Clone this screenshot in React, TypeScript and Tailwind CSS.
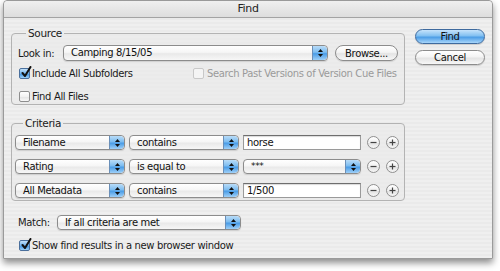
import React from "react";

function Stepper() {
  return (
    <div className="w-[15px] h-full shrink-0 rounded-r-[4px] border-l border-[#6a8fb8] bg-[linear-gradient(to_bottom,#b9dcf8_0%,#7cbcf0_45%,#4a9ce6_55%,#9fd0f8_100%)] flex flex-col items-center justify-center gap-[2px]">
      <svg width="5" height="3" viewBox="0 0 5 3">
        <path d="M2.5 0 L5 3 L0 3Z" fill="#111" />
      </svg>
      <svg width="5" height="3" viewBox="0 0 5 3">
        <path d="M0 0 L5 0 L2.5 3Z" fill="#111" />
      </svg>
    </div>
  );
}

function Popup({ label, className, textClass }: { label: string; className: string; textClass?: string }) {
  return (
    <div
      className={`flex h-[15px] shrink-0 rounded-[4px] border border-[#8c8c8c] overflow-hidden bg-[linear-gradient(to_bottom,#ffffff_0%,#f6f6f6_45%,#e9e9e9_55%,#f7f7f7_100%)] shadow-[0_1px_1px_rgba(0,0,0,0.12)] ${className}`}
    >
      <span className={`flex-1 pl-[7px] leading-[13px] text-[#111] whitespace-nowrap ${textClass ?? ""}`}>{label}</span>
      <Stepper />
    </div>
  );
}

function TextField({ value, className }: { value: string; className: string }) {
  return (
    <div
      className={`h-[15px] shrink-0 bg-white border border-[#9a9a9a] border-t-[#6e6e6e] shadow-[inset_0_1px_1px_rgba(0,0,0,0.15)] pl-[3px] leading-[13px] text-[#111] ${className}`}
    >
      {value}
    </div>
  );
}

function CheckBox({ checked, disabled }: { checked?: boolean; disabled?: boolean }) {
  if (checked) {
    return (
      <div className="relative w-[11px] h-[11px] shrink-0 rounded-[2px] border border-[#4a6f9c] bg-[linear-gradient(to_bottom,#c3e1fa_0%,#70b3ee_50%,#3f94e3_55%,#9dd0f7_100%)]">
        <svg className="absolute left-[1px] top-[-3px]" width="11" height="12" viewBox="0 0 11 12">
          <path d="M1.5 7 L4 10 L9.5 1" fill="none" stroke="#111" strokeWidth="2" strokeLinecap="round" strokeLinejoin="round" />
        </svg>
      </div>
    );
  }
  return (
    <div
      className={`w-[11px] h-[11px] shrink-0 rounded-[2px] border ${
        disabled
          ? "border-[#c8c8c8] bg-[#f4f4f4]"
          : "border-[#8e8e8e] bg-[linear-gradient(to_bottom,#ffffff_0%,#f2f2f2_50%,#e4e4e4_55%,#f8f8f8_100%)]"
      }`}
    />
  );
}

function RoundBtn({ sign }: { sign: "+" | "-" }) {
  return (
    <div className="w-[13px] h-[13px] shrink-0 rounded-full border border-[#8f8f8f] bg-[linear-gradient(to_bottom,#ffffff_0%,#f0f0f0_50%,#e2e2e2_55%,#f6f6f6_100%)] flex items-center justify-center">
      <svg width="7" height="7" viewBox="0 0 7 7">
        <path d="M0.5 3.5 H6.5" stroke="#444" strokeWidth="1.2" />
        {sign === "+" && <path d="M3.5 0.5 V6.5" stroke="#444" strokeWidth="1.2" />}
      </svg>
    </div>
  );
}

function AquaButton({ label, primary }: { label: string; primary?: boolean }) {
  return (
    <div
      className={`h-[15px] w-[70px] rounded-full border flex items-center justify-center leading-[13px] text-[#111] shadow-[0_1px_1px_rgba(0,0,0,0.15)] ${
        primary
          ? "border-[#3e6a9e] bg-[linear-gradient(to_bottom,#c6e3fb_0%,#82c0f1_45%,#4c9de6_55%,#a7d5fa_100%)]"
          : "border-[#8c8c8c] bg-[linear-gradient(to_bottom,#ffffff_0%,#f4f4f4_45%,#e4e4e4_55%,#f7f7f7_100%)]"
      }`}
    >
      {label}
    </div>
  );
}

export default function App() {
  return (
    <div className="w-[500px] h-[271px] bg-white font-['DejaVu_Sans',sans-serif] text-[10px] tracking-[-0.35px] text-[#1a1a1a] overflow-hidden">
      <div className="ml-[3px] w-[490px] h-[259px] flex flex-col border border-[#9a9a9a] rounded-t-[4px] shadow-[0_4px_7px_rgba(0,0,0,0.45)] bg-[repeating-linear-gradient(0deg,#efefef_0px,#efefef_2px,#eaeaea_2px,#eaeaea_4px)]">
        {/* title bar */}
        <div className="h-[17px] shrink-0 flex items-center justify-center border-b border-[#a3a3a3] rounded-t-[4px] bg-[linear-gradient(to_bottom,#f0f0f0_0%,#dddddd_100%)] text-[11px] text-[#222]">
          Find
        </div>

        {/* body */}
        <div className="flex flex-1">
          {/* left column */}
          <div className="ml-[7px] w-[394px] flex flex-col">
            <fieldset className="mt-[9px] border border-[#b3b3b3] rounded-[4px] pl-[6px] pr-[4px] pb-[2px] bg-[#e9e9e9]/60">
              <legend className="ml-[8px] px-[2px] text-[10.5px] leading-[12px]">Source</legend>
              <div className="mt-[6px] flex items-center h-[16px]">
                <span className="w-[45px]">Look in:</span>
                <Popup label="Camping 8/15/05" className="w-[265px] h-[16px]" />
                <div className="ml-[7px] h-[16px] w-[63px] rounded-full border border-[#8c8c8c] flex items-center justify-center bg-[linear-gradient(to_bottom,#ffffff_0%,#f4f4f4_45%,#e4e4e4_55%,#f7f7f7_100%)] shadow-[0_1px_1px_rgba(0,0,0,0.12)] text-[#111]">
                  Browse...
                </div>
              </div>
              <div className="mt-[6px] flex items-center h-[12px] whitespace-nowrap">
                <div className="flex items-center w-[175px] shrink-0 pl-[1px]">
                  <CheckBox checked />
                  <span className="ml-[2px]">Include All Subfolders</span>
                </div>
                <div className="flex items-center text-[#9a9a9a]">
                  <CheckBox disabled />
                  <span className="ml-[3px]">Search Past Versions of Version Cue Files</span>
                </div>
              </div>
              <div className="mt-[11px] flex items-center h-[12px] pl-[1px]">
                <CheckBox />
                <span className="ml-[2px]">Find All Files</span>
              </div>
            </fieldset>

            <fieldset className="mt-[12px] border border-[#b3b3b3] rounded-[4px] pl-[3px] pr-[4px] pb-[2px] bg-[#e9e9e9]/60">
              <legend className="ml-[8px] px-[2px] text-[10.5px] leading-[12px]">Criteria</legend>
              <div className="mt-[6px] flex flex-col gap-[9px]">
                <div className="flex items-center h-[15px]">
                  <Popup label="Filename" className="w-[110px]" />
                  <Popup label="contains" className="ml-[4px] w-[110px]" />
                  <TextField value="horse" className="ml-[4px] w-[118px]" />
                  <div className="ml-[6px]"><RoundBtn sign="-" /></div>
                  <div className="ml-[6px]"><RoundBtn sign="+" /></div>
                </div>
                <div className="flex items-center h-[15px]">
                  <Popup label="Rating" className="w-[110px]" />
                  <Popup label="is equal to" className="ml-[4px] w-[110px]" />
                  <Popup label="***" className="ml-[4px] w-[118px]" textClass="text-[9px] pl-[5px]" />
                  <div className="ml-[6px]"><RoundBtn sign="-" /></div>
                  <div className="ml-[6px]"><RoundBtn sign="+" /></div>
                </div>
                <div className="flex items-center h-[15px]">
                  <Popup label="All Metadata" className="w-[110px]" />
                  <Popup label="contains" className="ml-[4px] w-[110px]" />
                  <TextField value="1/500" className="ml-[4px] w-[118px]" />
                  <div className="ml-[6px]"><RoundBtn sign="-" /></div>
                  <div className="ml-[6px]"><RoundBtn sign="+" /></div>
                </div>
              </div>
            </fieldset>

            <div className="mt-[14px] flex items-center h-[15px] pl-[7px]">
              <span className="w-[39px]">Match:</span>
              <Popup label="If all criteria are met" className="w-[184px]" />
            </div>
            <div className="mt-[9px] flex items-center h-[12px] pl-[8px]">
              <CheckBox checked />
              <span className="ml-[2px]">Show find results in a new browser window</span>
            </div>
          </div>

          {/* right column */}
          <div className="ml-[10px] mt-[11px] flex flex-col gap-[6px]">
            <AquaButton label="Find" primary />
            <AquaButton label="Cancel" />
          </div>
        </div>
      </div>
    </div>
  );
}
